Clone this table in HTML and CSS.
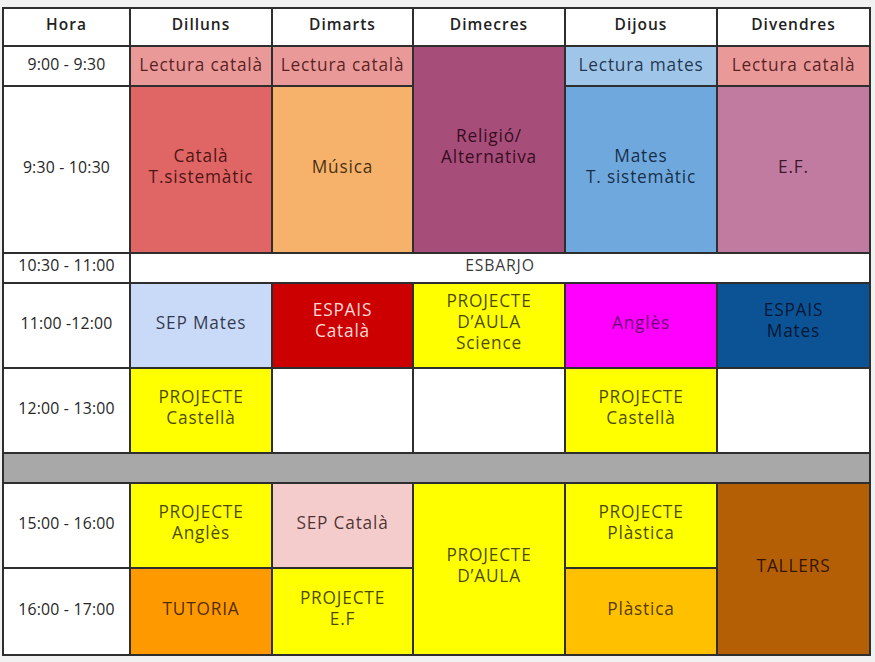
FILE: index.html
```html
<!DOCTYPE html>
<html lang="ca">
<head>
<meta charset="utf-8">
<title>Horari</title>
<link rel="stylesheet" href="styles.css">
</head>
<body>
<div class="timetable">
  <div class="cell head">Hora</div>
  <div class="cell head">Dilluns</div>
  <div class="cell head">Dimarts</div>
  <div class="cell head">Dimecres</div>
  <div class="cell head">Dijous</div>
  <div class="cell head">Divendres</div>

  <div class="cell time short">9:00 - 9:30</div>
  <div class="cell c-lect">Lectura català</div>
  <div class="cell c-lect">Lectura català</div>
  <div class="cell c-rel span-r2">Religió/<br>Alternativa</div>
  <div class="cell c-lmat">Lectura mates</div>
  <div class="cell c-lect">Lectura català</div>

  <div class="cell time">9:30 - 10:30</div>
  <div class="cell c-cat">Català<br>T.sistemàtic</div>
  <div class="cell c-mus">Música</div>
  <div class="cell c-mat">Mates<br>T. sistemàtic</div>
  <div class="cell c-ef">E.F.</div>

  <div class="cell time">10:30 - 11:00</div>
  <div class="cell blank span-c5 esbarjo">ESBARJO</div>

  <div class="cell time">11:00 -12:00</div>
  <div class="cell c-sepm">SEP Mates</div>
  <div class="cell c-espc">ESPAIS<br>Català</div>
  <div class="cell c-proj">PROJECTE<br>D’AULA<br>Science</div>
  <div class="cell c-ang">Anglès</div>
  <div class="cell c-espm">ESPAIS<br>Mates</div>

  <div class="cell time">12:00 - 13:00</div>
  <div class="cell c-proj">PROJECTE<br>Castellà</div>
  <div class="cell blank"></div>
  <div class="cell blank"></div>
  <div class="cell c-proj">PROJECTE<br>Castellà</div>
  <div class="cell blank"></div>

  <div class="cell c-grey span-c6"></div>

  <div class="cell time">15:00 - 16:00</div>
  <div class="cell c-proj">PROJECTE<br>Anglès</div>
  <div class="cell c-sepc">SEP Català</div>
  <div class="cell c-proj span-r2">PROJECTE<br>D’AULA</div>
  <div class="cell c-proj">PROJECTE<br>Plàstica</div>
  <div class="cell c-tall span-r2">TALLERS</div>

  <div class="cell time">16:00 - 17:00</div>
  <div class="cell c-tut">TUTORIA</div>
  <div class="cell c-proj">PROJECTE<br>E.F</div>
  <div class="cell c-plas">Plàstica</div>
</div>
</body>
</html>
```

FILE: styles.css
```css
html, body {
  margin: 0;
  padding: 0;
}
body {
  background: #f1f1f1;
  font-family: "Open Sans", "Lato", sans-serif;
  padding: 7px 0 0 2px;
}
.timetable {
  display: grid;
  grid-template-columns: 125px 140px 139px 150px 150px 151px;
  grid-template-rows: 36px 38px 165px 28px 83px 83px 28px 83px 85px;
  gap: 2px;
  padding: 2px;
  background: #2e2e2e;
  width: max-content;
}
.cell {
  display: flex;
  align-items: center;
  justify-content: center;
  text-align: center;
  font-size: 17.3px;
  line-height: 21px;
  letter-spacing: 0.8px;
  color: rgba(0, 0, 0, 0.8);
  padding-bottom: 7px;
  box-sizing: border-box;
  background: #ffffff;
  white-space: nowrap;
}
.head {
  font-weight: 600;
  font-size: 15.5px;
  letter-spacing: 1px;
  color: #222;
  padding-bottom: 5px;
}
.time {
  font-size: 15.8px;
  letter-spacing: 0.2px;
  color: #262626;
  padding-bottom: 5px;
}
.time.short { padding-bottom: 3px; }
.span-r2 { grid-row: span 2; }
.span-c5 { grid-column: span 5; }
.span-c6 { grid-column: span 6; }
.esbarjo { font-size: 15.8px; padding-bottom: 5px; }

.c-lect { background: #ea9999; color: rgba(60, 10, 10, 0.85); padding-bottom: 3px; }
.c-lmat { background: #9fc5e8; color: rgba(10, 25, 50, 0.85); padding-bottom: 3px; }
.c-rel { background: #a64d79; color: rgba(30, 0, 15, 0.85); }
.c-cat { background: #e06666; color: rgba(50, 5, 5, 0.85); }
.c-mus { background: #f6b26b; color: rgba(40, 20, 0, 0.85); }
.c-mat { background: #6fa8dc; color: rgba(5, 20, 45, 0.85); }
.c-ef { background: #c27ba0; color: rgba(30, 5, 20, 0.85); }
.c-sepm { background: #c9daf8; color: rgba(20, 25, 45, 0.85); }
.c-espc { background: #cc0000; color: #ffd9d9; padding-bottom: 12px; }
.c-proj { background: #ffff00; color: rgba(40, 40, 0, 0.85); padding-bottom: 8px; }
.c-ang { background: #ff00ff; color: rgba(80, 0, 90, 0.85); }
.c-espm { background: #0b5394; color: rgba(0, 15, 40, 0.9); padding-bottom: 12px; }
.c-grey { background: #a8a8a8; }
.c-sepc { background: #f4cccc; color: rgba(50, 20, 20, 0.85); }
.c-tut { background: #ff9900; color: rgba(50, 20, 0, 0.85); }
.c-plas { background: #ffc000; color: rgba(50, 35, 0, 0.85); }
.c-tall { background: #b45f06; color: rgba(35, 12, 0, 0.9); }
```
